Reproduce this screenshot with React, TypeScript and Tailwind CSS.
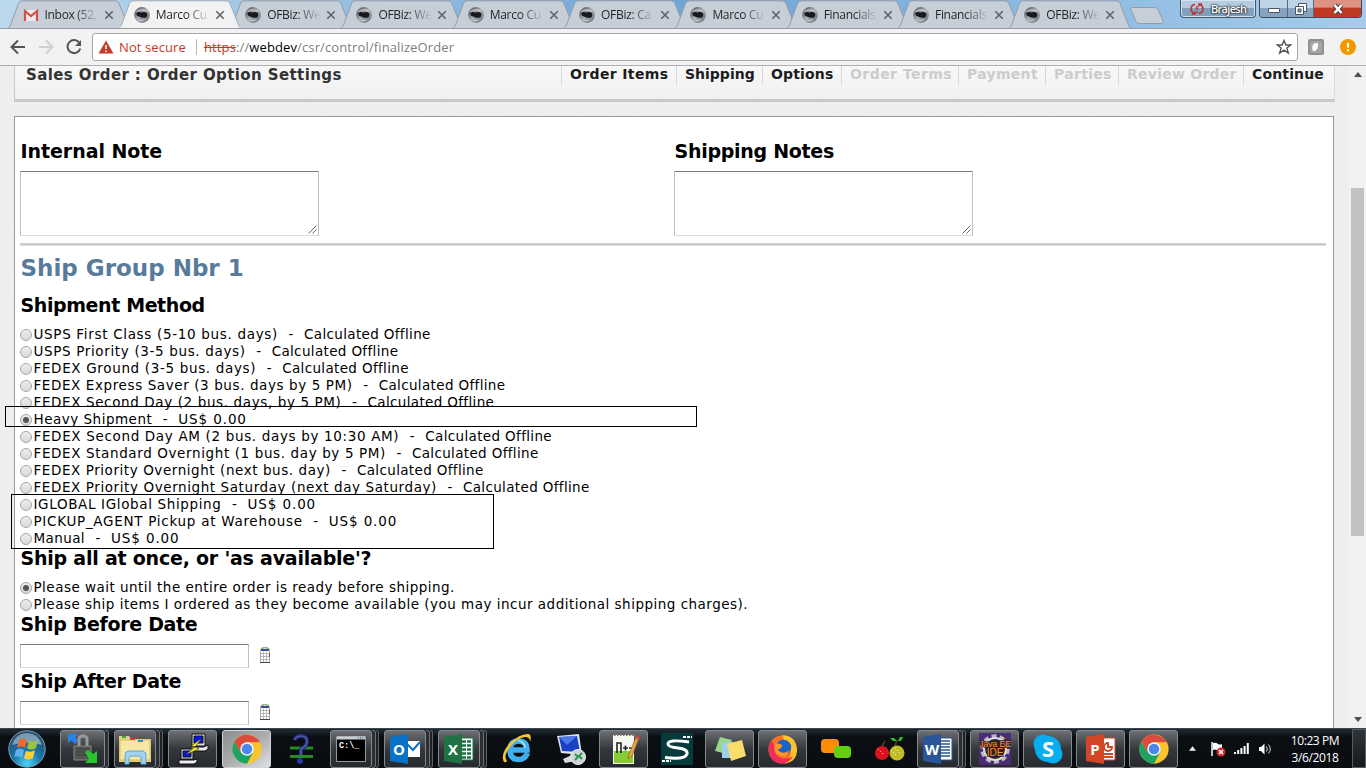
import React from "react";

const TABS = [
  "Inbox (52,",
  "Marco Cu",
  "OFBiz: We",
  "OFBiz: We",
  "Marco Cu",
  "OFBiz: Ca",
  "Marco Cu",
  "Financials",
  "Financials",
  "OFBiz: We",
];

const NAV = [
  { label: "Order Items", w: "w-[115px] tracking-[0.36px]", on: true },
  { label: "Shipping", w: "w-[86px]", on: true },
  { label: "Options", w: "w-[79px] tracking-[0.15px]", on: true },
  { label: "Order Terms", w: "w-[117px] tracking-[0.45px]", on: false },
  { label: "Payment", w: "w-[87px] tracking-[0.3px]", on: false },
  { label: "Parties", w: "w-[73px] tracking-[0.3px]", on: false },
  { label: "Review Order", w: "w-[125px] tracking-[0.25px]", on: false },
  { label: "Continue", w: "w-[91px] tracking-[0.15px]", on: true },
];

const OFFLINE = "Calculated Offline";
const FREE = "US$ 0.00";

const METHODS = [
  { name: "USPS First Class (5-10 bus. days)", price: OFFLINE, track: "tracking-[0.68px]" },
  { name: "USPS Priority (3-5 bus. days)", price: OFFLINE, track: "tracking-[0.65px]" },
  { name: "FEDEX Ground (3-5 bus. days)", price: OFFLINE, track: "tracking-[0.66px]" },
  { name: "FEDEX Express Saver (3 bus. days by 5 PM)", price: OFFLINE, track: "tracking-[0.6px]" },
  { name: "FEDEX Second Day (2 bus. days, by 5 PM)", price: OFFLINE, track: "tracking-[0.62px]" },
  { name: "Heavy Shipment", price: FREE, track: "tracking-[0.5px]" },
  { name: "FEDEX Second Day AM (2 bus. days by 10:30 AM)", price: OFFLINE, track: "tracking-[0.66px]" },
  { name: "FEDEX Standard Overnight (1 bus. day by 5 PM)", price: OFFLINE, track: "tracking-[0.62px]" },
  { name: "FEDEX Priority Overnight (next bus. day)", price: OFFLINE, track: "tracking-[0.57px]" },
  { name: "FEDEX Priority Overnight Saturday (next day Saturday)", price: OFFLINE, track: "tracking-[0.59px]" },
  { name: "IGLOBAL IGlobal Shipping", price: FREE, track: "tracking-[0.64px]" },
  { name: "PICKUP_AGENT Pickup at Warehouse", price: FREE, track: "tracking-[0.72px]" },
  { name: "Manual", price: FREE, track: "tracking-[0.4px]" },
];

function Globe() {
  return (
    <svg viewBox="0 0 16 16" className="h-4 w-4 shrink-0">
      <defs>
        <linearGradient id="gl" x1="0" y1="0" x2="1" y2="1">
          <stop offset="0" stopColor="#3c4046" />
          <stop offset=".5" stopColor="#a9aeb4" />
          <stop offset="1" stopColor="#5f646a" />
        </linearGradient>
      </defs>
      <circle cx="8" cy="8" r="7.9" fill="url(#gl)" />
      <path d="M2 4Q7 .5 13 3.500L13.500 5Q8 2.500 2.500 5.500Z" fill="#d5d8db" opacity=".6" />
      <path d="M2.500 6Q4 4.500 7 5.500Q11 4.500 13 6Q14 9 12 10.500Q8 11.500 5 9.500Q2 9 2.500 6Z" fill="#17191c" />
      <path d="M3 12.500Q8 16 13 12Q8 13.500 3 12.500Z" fill="#fff" opacity=".5" />
    </svg>
  );
}

function Gmail() {
  return (
    <svg viewBox="0 0 16 16" className="h-4 w-4 shrink-0">
      <path d="M2 3H14V14H2Z" fill="#eceaea" />
      <path d="M2 14V4L8 9L14 4V14" fill="none" stroke="#d5524a" strokeWidth="2.200" />
    </svg>
  );
}

function Tab({ label, index }: { label: string; index: number }) {
  const active = index === 1;
  return (
    <div className={active ? "relative z-10 -mr-[12.7px] h-[29px] w-[124px] shrink-0" : "relative -mr-[12.7px] h-[29px] w-[124px] shrink-0"}>
      <svg viewBox="0 0 124 29" className="absolute inset-0 h-[29px] w-[124px]">
        <path
          d="M0 28.500C2 28 2.500 27 3.500 25L11.500 3.500Q12.500 .8 15 .8H108Q111 .8 112 3.500L120.500 25C121.500 27.500 122 28 124 28.500Z"
          fill={active ? "#f2f2f2" : "#c6ced7"}
          stroke={active ? "#a5adb6" : "#939ca8"}
        />
        {active ? <path d="M0 28.500H124" stroke="#f2f2f2" strokeWidth="1.500" /> : <path d="M0 28.500H124" stroke="#939ca8" />}
      </svg>
      <div className="relative flex h-[30px] items-center pl-4">
        {index === 0 ? <Gmail /> : <Globe />}
        <span className="ml-1.5 w-[54px] overflow-hidden whitespace-pre bg-linear-to-r from-[#222] from-55% to-[#22222200] bg-clip-text text-[12px] leading-4 tracking-[-0.3px] text-transparent">
          {label}
        </span>
        <svg viewBox="0 0 10 10" className="ml-[5px] h-[10px] w-[10px]">
          <path d="M1.300 1.300L8.700 8.700M8.700 1.300L1.300 8.700" stroke="#5f6368" strokeWidth="1.600" />
        </svg>
      </div>
    </div>
  );
}

function WindowControls() {
  return (
    <div className="absolute right-1 top-0 flex h-[18px] text-[12px] text-white">
      <div className="mr-[3px] flex h-[18px] w-[76px] items-center gap-[7px] rounded-b-[4px] border border-t-0 border-[#46566c] bg-linear-to-b from-[#b4cbe0] from-45% to-[#7f9fbd] to-50% pl-[9px] shadow-[inset_0_0_0_1px_#d3e2ef]">
        <svg viewBox="0 0 14 12" className="h-3 w-3.5">
          <path d="M5 1.500Q1 2 1 6Q1 9 4 10.500M9 10.500Q13 10 13 6Q13 3 10 1.500M2 11H5V8.500M12 1H9V3.500M7 3V7M7 8.500V10" fill="none" stroke="#c4302b" strokeWidth="1.500" />
        </svg>
        <span className="text-[11px] font-semibold leading-none tracking-[-0.7px] [text-shadow:0_0_2px_#222,0_0_2px_#222,0_0_1px_#222]">Brajesh</span>
      </div>
      <div className="flex h-[18px] w-[103px] overflow-hidden rounded-b-[4px] border border-t-0 border-[#3f4d60]">
        <div className="flex w-[28px] items-center justify-center border-r border-[#57687d] bg-linear-to-b from-[#bfd3e6] from-45% to-[#86a3bf] to-50%">
          <div className="mt-1 h-[5px] w-3 rounded-[1px] border border-[#4b5562] bg-white" />
        </div>
        <div className="flex w-[26px] items-center justify-center border-r border-[#57687d] bg-linear-to-b from-[#bfd3e6] from-45% to-[#86a3bf] to-50%">
          <svg viewBox="0 0 12 12" className="h-3 w-3">
            <path d="M3.500 .5H11.500V8.500H3.500Z" fill="#fff" stroke="#4b5562" />
            <path d="M.5 3.500H8.500V11.500H.5Z" fill="#fff" stroke="#4b5562" />
            <path d="M3 6H6V9H3Z" fill="#8aa5c0" stroke="#4b5562" />
          </svg>
        </div>
        <div className="flex flex-1 items-center justify-center bg-linear-to-b from-[#dd9384] from-40% to-[#bf3822] to-50%">
          <svg viewBox="0 0 14 12" className="h-3 w-3.5">
            <path d="M3.500 2L10.500 10M10.500 2L3.500 10" stroke="#46414a" strokeWidth="4.500" />
            <path d="M3.500 2L10.500 10M10.500 2L3.500 10" stroke="#fff" strokeWidth="2.600" />
          </svg>
        </div>
      </div>
    </div>
  );
}

function Radio({ on }: { on?: boolean }) {
  return (
    <span className="mt-[3px] flex h-3 w-3 shrink-0 items-center justify-center rounded-full border border-[#a6a6a6] bg-linear-to-b from-[#eee] to-[#d8d8d8]">
      {on ? <span className="h-1.5 w-1.5 rounded-full bg-[#555]" /> : null}
    </span>
  );
}

function Option({ text, price, track, on }: { text: string; price?: string; track: string; on?: boolean }) {
  return (
    <div className="flex h-[17px] items-start whitespace-pre text-[13.500px] leading-[17px]">
      <Radio on={on} />
      <span className={"ml-[1.5px] " + track}>{text}</span>
      {price ? <span className="w-[26px] shrink-0 text-center">-</span> : null}
      {price ? <span className={price === FREE ? "tracking-[0.9px]" : "tracking-[0.35px]"}>{price}</span> : null}
    </div>
  );
}

function Heading({ children, className = "tracking-[-0.3px]" }: { children: React.ReactNode; className?: string }) {
  return <h3 className={"whitespace-nowrap pl-[0.5px] text-[19px] font-bold leading-6 " + className}>{children}</h3>;
}

function Note({ title, track }: { title: string; track: string }) {
  return (
    <div className="w-[654px]">
      <Heading className={track}>{title}</Heading>
      <div className="mt-[8px] flex h-[65px] w-[299px] items-end justify-end border border-[#c0c0c0] border-b-[#ddd] border-t-[#7a7a7a] bg-white p-px">
        <svg viewBox="0 0 9 9" className="h-[9px] w-[9px]">
          <path d="M.5 8.500L8.500 .5M4.500 8.500L8.500 4.500" stroke="#666" fill="none" />
        </svg>
      </div>
    </div>
  );
}

function DateField() {
  return (
    <div className="flex items-start">
      <div className="h-6 w-[229px] border border-[#c0c0c0] border-b-[#ddd] border-t-[#7a7a7a] bg-white" />
      <svg viewBox="0 0 10 16" className="ml-[11px] mt-[3px] h-4 w-[10px]">
        <path d="M.5 3.500Q.5 1 3 .5H7Q9.500 1 9.500 3.500V15.500H.5Z" fill="#fff" stroke="#aaa" />
        <path d="M1 2Q5 -.5 9 2" stroke="#83b576" fill="none" />
        <path d="M1 2H9V4H1Z" fill="#4148a2" />
        <path d="M1 6.500H9M1 9.500H9M1 12.500H9M3.500 4.500V15M6.500 4.500V15" stroke="#aaa" strokeWidth=".8" />
        <path d="M0 15.500H10" stroke="#444" />
        <path d="M9.500 6V10" stroke="#a44" />
      </svg>
    </div>
  );
}

function Chrome() {
  return (
    <svg viewBox="0 0 40 40" className="h-[30px] w-[30px]">
      <circle cx="20" cy="20" r="19.500" fill="#fbc42d" />
      <path d="M3.100 10.250A19.500 19.500 0 0 0 20 39.500L28 24.500L12 24.500Z" fill="#1da462" />
      <path d="M3.100 10.250L12 25L20 20V11H37Q34 3 20 .5Q9 1 3.100 10.250Z" fill="#dd4b3e" />
      <circle cx="20" cy="20" r="9" fill="#f5f5f5" />
      <circle cx="20" cy="20" r="7" fill="#4b88ee" />
    </svg>
  );
}

function OfficeIcon({ letter, color, kind }: { letter: string; color: string; kind: string }) {
  return (
    <svg viewBox="0 0 32 32" className="h-8 w-8">
      {kind === "mail" ? (
        <g>
          <path d="M18 8H31V24H18Z" fill="#fff" />
          <path d="M17 10L24 17L31 9" fill="none" stroke={color} strokeWidth="2" />
        </g>
      ) : (
        <g>
          <path d="M17 5H30V27H17Z" fill="#fff" stroke={color} />
          {kind === "pie" ? (
            <g fill="none" stroke={color} strokeWidth="2">
              <path d="M23 10A4 4 0 1 0 27 14H23Z" />
              <path d="M19 21H28M19 24H28" />
            </g>
          ) : kind === "grid" ? (
            <path d="M19 8.500H28M19 12.500H28M19 16.500H28M19 20.500H28M19 24.500H28" stroke={color} strokeWidth="2.500" strokeDasharray="4 1" />
          ) : (
            <path d="M19 8H28M19 11H28M19 14H28M19 17H28M19 20H28M19 23H28" stroke={color} strokeWidth="1.300" />
          )}
        </g>
      )}
      <path d="M1 4L19 1V31L1 28Z" fill={color} />
      <text x="10" y="21.500" textAnchor="middle" fontSize="15" fontWeight="700" fill="#fff" fontFamily="Open Sans, sans-serif">
        {letter}
      </text>
    </svg>
  );
}

function Vpn() {
  return (
    <svg viewBox="0 0 32 32" className="h-8 w-8">
      <path d="M12 13V6Q12 3 16 3Q20 3 20 6V13" fill="none" stroke="#999" strokeWidth="3" />
      <path d="M7 13H24V27H7Z" fill="#555" stroke="#888" />
      <path d="M9 16H22M9 19H22M9 22H22" stroke="#3c3c3c" />
      <path d="M1 1H11L8 4L11 8L8 11L4 7L1 10Z" fill="#2684ee" />
      <path d="M18 19L21 17L26 21L30 18V30H18L22 26Z" fill="#27c52e" />
    </svg>
  );
}

function Folder() {
  return (
    <svg viewBox="0 0 36 32" className="h-8 w-9">
      <path d="M2 3H12L14 6H34V29H2Z" fill="#e8cf78" />
      <path d="M3 7H33V27H3Z" fill="#f7e7a4" stroke="#d8bc60" />
      <path d="M5 4H9" stroke="#34a853" strokeWidth="2" />
      <path d="M13 6H18" stroke="#d34" strokeWidth="2" />
      <path d="M21 8H26" stroke="#38c" strokeWidth="2" />
      <path d="M8 31V22Q8 18 12 18H24Q29 18 29 22V31H24V25Q24 23 22 23H15Q12 23 12 25V31Z" fill="#9fd3ef" stroke="#5fa8d0" />
    </svg>
  );
}

function Putty() {
  return (
    <svg viewBox="0 0 32 32" className="h-8 w-8" stroke="#111">
      <path d="M15 1H28V13H15Z" fill="#ddd" />
      <path d="M17 3H26V10H17Z" fill="#0b14e8" />
      <path d="M14 14H27L31 12V16L28 18H14Z" fill="#eee" />
      <path d="M4 16H16V26H4Z" fill="#ddd" />
      <path d="M6 18H14V24H6Z" fill="#0b14e8" />
      <path d="M2 27H17L20 26V29L17 31H2Z" fill="#eee" />
      <path d="M25 5L14 13L18 14L8 22L22 16L18 14Z" fill="#f7ee1c" strokeWidth=".5" />
    </svg>
  );
}

function Help() {
  return (
    <svg viewBox="0 0 32 32" className="h-8 w-8">
      <path d="M5 15H28M5 23.500H28" stroke="#238c25" strokeWidth="3" />
      <path d="M9.500 7Q11 3 16 3Q22 3 22 8.500Q22 13 16 16V22" fill="none" stroke="#222b80" strokeWidth="4" />
      <path d="M9.500 7Q11 3 16 3Q22 3 22 8.500Q22 13 16 16V22" fill="none" stroke="#4f5cab" strokeWidth="1.600" />
      <circle cx="15" cy="28" r="3" fill="#2b35a4" />
    </svg>
  );
}

function Cmd() {
  return (
    <svg viewBox="0 0 30 26" className="h-[26px] w-[30px]">
      <path d="M.5 .5H29.500V25.500H.5Z" fill="#000" stroke="#999" />
      <path d="M1 2H29" stroke="#c9ced4" strokeWidth="3" />
      <path d="M22 2H28" stroke="#345" strokeDasharray="1 1" />
      <text x="3" y="12" fontSize="8.500" fontWeight="700" fill="#fff" fontFamily="Liberation Mono, monospace">C:\_</text>
    </svg>
  );
}

function InternetExplorer() {
  return (
    <svg viewBox="0 0 32 32" className="h-8 w-8">
      <path d="M26.500 20Q24 26.500 17.500 26.500Q9 26.500 9 17Q9 8 17.500 8Q26 8 26 17H11" fill="none" stroke="#3fb0ec" strokeWidth="5.500" />
      <path d="M24 15Q23 8 17 7.500" fill="none" stroke="#aee5fb" strokeWidth="1.500" />
      <path d="M3 29Q-1 22 8 11Q19 0 28 1Q31 3 29 9Q29 4 24 4Q16 5 9 14Q2 23 6 28Q4.500 30 3 29Z" fill="#f5c433" />
    </svg>
  );
}

function Remote() {
  return (
    <svg viewBox="0 0 32 32" className="h-8 w-8">
      <path d="M2 3L24 1L27 22L6 20Z" fill="#dde4ea" />
      <path d="M4 4L22 3L25 19L7 18Z" fill="#1842c4" />
      <path d="M4 4L22 3L12 12Z" fill="#4b79e5" />
      <path d="M8 26L17 22L21 28L10 30Z" fill="#d6d9dd" />
      <circle cx="23" cy="24" r="7.500" fill="#cdd3d7" stroke="#edf0f1" />
      <path d="M20 21L23 24L20 27M27 20L24 23L27 26" stroke="#239344" strokeWidth="1.800" fill="none" />
    </svg>
  );
}

function Notepad() {
  return (
    <svg viewBox="0 0 32 32" className="h-8 w-8">
      <path d="M5 2H26V31H5Z" fill="#f6f8ef" />
      <path d="M6 18H25V30H6Z" fill="#88cc35" />
      <path d="M6 2H26" stroke="#777" strokeWidth="2" strokeDasharray="1.500 1.500" />
      <path d="M9 20V10H13V20M15 15H20M17.500 12.500V17.500M21 15H25" fill="none" stroke="#222" strokeWidth="1.600" />
      <path d="M29 2L31 5L24 23L20 26L21 21Z" fill="#eaa83d" stroke="#8a612e" strokeWidth=".7" />
      <path d="M28 2L32 4L31 7L27 5Z" fill="#c64d4d" />
    </svg>
  );
}

function Sfs() {
  return (
    <svg viewBox="0 0 32 32" className="h-8 w-8">
      <path d="M0 0H32V32H0Z" fill="#063b3c" />
      <path d="M28 9Q7 6 7 11Q7 14 17 15Q27 16 26 21Q24 27 4 24.500" fill="none" stroke="#fff" strokeWidth="3" />
      <path d="M22 4H31M1 28H10" stroke="#fff" strokeWidth="2" strokeDasharray="3 1" />
    </svg>
  );
}

function Sticky() {
  return (
    <svg viewBox="0 0 32 26" className="h-[26px] w-8">
      <path d="M6 1L18 4L13 18L1 15Z" fill="#9bd58a" />
      <path d="M8 7L22 6V22H8Z" fill="#9ed0ed" />
      <path d="M13 8L28 4L32 20L17 25Z" fill="#f9dd6a" />
    </svg>
  );
}

function Firefox() {
  return (
    <svg viewBox="0 0 32 32" className="h-[31px] w-[31px]">
      <circle cx="16" cy="17" r="14.500" fill="#fc7225" />
      <path d="M16 2Q30 3 31 17Q31 30 18 31.500Q29 21 22 11Q17 8 16 2Z" fill="#ffc229" />
      <path d="M2 12Q0 27 11 31Q22 33 27 24Q20 28 13 25Q7 22 8 14L5 8Z" fill="#f02e5c" />
      <circle cx="17" cy="15" r="8" fill="#1a63c4" />
      <path d="M8 12Q12 9 16 13Q14 17 11 17Q15 23 23 18Q20 27 12 23Q6 20 8 12Z" fill="#ff9427" />
    </svg>
  );
}

function Blobs() {
  return (
    <svg viewBox="0 0 32 22" className="h-[22px] w-8">
      <rect x="1" y="1" width="18" height="14" rx="4" fill="#ff8c08" />
      <rect x="14" y="8" width="17" height="12" rx="4" fill="#62cf10" />
    </svg>
  );
}

function Fruit() {
  return (
    <svg viewBox="0 0 32 26" className="h-[26px] w-8">
      <path d="M9 10L12 5M22 10L24 4" stroke="#5a3d22" strokeWidth="1.500" fill="none" />
      <path d="M17 2H21L24 5H20ZM25 5L27 1H30L28 5Z" fill="#20c923" />
      <circle cx="9" cy="17" r="7" fill="#d9151b" />
      <circle cx="24" cy="17" r="7.500" fill="#c2bc25" />
      <path d="M5 13L10 18M18 14L24 20M22 12L28 18" stroke="#fff" strokeDasharray="1 2" />
    </svg>
  );
}

function Eclipse() {
  return (
    <svg viewBox="0 0 32 32" className="h-8 w-8">
      <path d="M0 0H32V32H0Z" fill="#4b2b75" />
      <circle cx="16" cy="16" r="13" fill="none" stroke="#bbb" strokeWidth="3.500" strokeDasharray="5 3.200" />
      <circle cx="16" cy="16" r="11" fill="#292130" stroke="#ddd" strokeWidth="2" />
      <g fill="#ff8e25" stroke="#292130" strokeWidth="1.500" paintOrder="stroke" textAnchor="middle" fontSize="10" fontFamily="Liberation Sans, sans-serif">
        <text x="16" y="14" fontSize="9" letterSpacing="-.2">Java EE</text>
        <text x="16" y="23">IDE</text>
      </g>
    </svg>
  );
}

function Skype() {
  return (
    <svg viewBox="0 0 32 32" className="h-8 w-8">
      <circle cx="11" cy="11" r="9.500" fill="#08adef" />
      <circle cx="21" cy="21" r="9.500" fill="#08adef" />
      <circle cx="16" cy="16" r="13" fill="#08adef" />
      <text x="16" y="24" textAnchor="middle" fontSize="22" fontWeight="700" fill="#fff" fontFamily="Open Sans, sans-serif">S</text>
    </svg>
  );
}

const APPS: { icon: React.ReactNode; stack: number }[] = [
  { icon: <Vpn />, stack: 2 },
  { icon: <Folder />, stack: 3 },
  { icon: <Putty />, stack: 1 },
  { icon: <Chrome />, stack: 4 },
  { icon: <Help />, stack: 0 },
  { icon: <Cmd />, stack: 3 },
  { icon: <OfficeIcon letter="O" color="#0872c6" kind="mail" />, stack: 3 },
  { icon: <OfficeIcon letter="X" color="#207245" kind="grid" />, stack: 3 },
  { icon: <InternetExplorer />, stack: 0 },
  { icon: <Remote />, stack: 0 },
  { icon: <Notepad />, stack: 1 },
  { icon: <Sfs />, stack: 0 },
  { icon: <Sticky />, stack: 1 },
  { icon: <Firefox />, stack: 1 },
  { icon: <Blobs />, stack: 0 },
  { icon: <Fruit />, stack: 0 },
  { icon: <OfficeIcon letter="W" color="#2a5699" kind="lines" />, stack: 3 },
  { icon: <Eclipse />, stack: 1 },
  { icon: <Skype />, stack: 1 },
  { icon: <OfficeIcon letter="P" color="#d24726" kind="pie" />, stack: 1 },
  { icon: <Chrome />, stack: 1 },
];

const FACE = "flex h-[38px] flex-1 items-center justify-center rounded-[3px] border ";

function TaskButton({ icon, stack, narrow }: { icon: React.ReactNode; stack: number; narrow: boolean }) {
  const look =
    stack === 0
      ? "border-transparent"
      : stack === 4
        ? "border-[#d0d3d5] bg-linear-to-br from-[#8b8d90] via-[#aaacae] to-[#e0e1e2]"
        : "border-[#85898d] bg-linear-to-b from-[#6d7073] via-[#34373b] to-[#26292d]";
  return (
    <div className={narrow ? "mr-1 flex w-[49px] shrink-0" : "mr-[5px] flex w-[49px] shrink-0"}>
      <div className={FACE + look}>{icon}</div>
      {stack === 2 || stack === 3 ? <div className="h-[38px] w-[4px] rounded-r-[3px] border-y border-r border-[#6d7175] bg-[#2b2e32]" /> : null}
      {stack === 3 ? <div className="h-[38px] w-[3px] rounded-r-[3px] border-y border-r border-[#5d6165] bg-[#1e2125]" /> : null}
    </div>
  );
}

function StartOrb() {
  return (
    <svg viewBox="0 0 38 38" className="h-[38px] w-[38px]">
      <defs>
        <radialGradient id="orb" cx=".5" cy=".9" r=".85">
          <stop offset="0" stopColor="#4fd3f5" />
          <stop offset=".45" stopColor="#1976ac" />
          <stop offset="1" stopColor="#264b6b" />
        </radialGradient>
      </defs>
      <circle cx="19" cy="19" r="18.200" fill="url(#orb)" stroke="#7fa3b9" />
      <path d="M4 15Q8 3 19 3Q30 3 34 15Q19 10 4 15Z" fill="#d0e4ee" opacity=".5" />
      <path d="M11 10Q15 7 19 10L17 18Q13 15 9 18Z" fill="#ec6932" />
      <path d="M21 11Q25 13 30 10L28 18Q23 21 19 18Z" fill="#9bc63b" />
      <path d="M8 20Q12 17 16 20L14 28Q10 25 6 27Z" fill="#5cb1e8" />
      <path d="M18 21Q23 23 27 20L25 28Q20 31 16 28Z" fill="#ffce36" />
    </svg>
  );
}

function Taskbar() {
  return (
    <footer className="flex h-10 shrink-0 items-center border-t border-[#3b4650] bg-linear-to-b from-[#1d252d] from-5% via-[#0b0f14] via-20% to-[#090c10] font-['Open_Sans',sans-serif]">
      <div className="flex w-[60px] shrink-0 pl-2">
        <StartOrb />
      </div>
      {APPS.map((a, i) => (
        <TaskButton key={i} icon={a.icon} stack={a.stack} narrow={i >= 9} />
      ))}
      <div className="ml-[7px] flex items-center">
        <svg viewBox="0 0 8 5" className="h-[5px] w-[7px]">
          <path d="M0 5L4 0L8 5Z" fill="#eee" />
        </svg>
        <svg viewBox="0 0 16 16" className="ml-[14px] h-4 w-4">
          <path d="M2 1V15" stroke="#fff" strokeWidth="1.500" />
          <path d="M3 2Q6 1 8 3Q10 4 12 3V9Q9 10 7 9Q5 8 3 9Z" fill="#fff" />
          <circle cx="11" cy="11" r="4.500" fill="#d8292d" />
          <path d="M9 9L13 13M13 9L9 13" stroke="#fff" strokeWidth="1.500" />
        </svg>
        <svg viewBox="0 0 15 11" className="ml-[8px] h-[11px] w-[15px]">
          <path d="M1 11V9M4.200 11V7M7.400 11V5M10.600 11V3M13.800 11V0" stroke="#fff" strokeWidth="2" />
        </svg>
        <svg viewBox="0 0 14 12" className="ml-[9px] h-3 w-3.5">
          <path d="M1 4H3L6.500 .5V11.500L3 8H1Z" fill="#fff" />
          <path d="M8.500 3.500Q10 6 8.500 8.500M10.500 1.500Q14 6 10.500 10.500" stroke="#ddd" fill="none" />
        </svg>
      </div>
      <div className="ml-[14px] w-[58px] text-center text-[12px] leading-[17px] tracking-[-0.4px] text-white">
        <div>10:23 PM</div>
        <div>3/6/2018</div>
      </div>
      <div className="ml-auto h-[39px] w-[14px] shrink-0 border border-[#555b61] bg-linear-to-b from-[#30353a] to-[#15191d]" />
    </footer>
  );
}

function BrowserChrome() {
  return (
    <header className="shrink-0 font-['Open_Sans',sans-serif]">
      <div className="relative h-[29px] overflow-hidden border-b border-[#939ca8] bg-linear-to-r from-[#bcd9ee] via-[#6fa5d7] to-[#a5ccea]">
        <div className="flex pl-[6.500px]">
          {TABS.map((t, i) => (
            <Tab key={i} label={t} index={i} />
          ))}
          <svg viewBox="0 0 34 18" className="ml-[10px] mt-[7px] h-[18px] w-[34px]">
            <path d="M2 .5H25Q27 .5 28 2.500L33 14Q34 16.500 32 16.500H9Q7 16.500 6 14.500L1 3Q0 .5 2 .5Z" fill="#c6ced7" stroke="#939ca8" />
          </svg>
        </div>
        <WindowControls />
      </div>
      <div className="flex h-[37px] items-center border-b border-[#b0b0b0] bg-[#f2f2f2]">
        <svg viewBox="0 0 16 16" className="ml-2.5 h-4 w-4">
          <path d="M15 8H2M8 1.500L1.500 8L8 14.500" fill="none" stroke="#555" strokeWidth="2" />
        </svg>
        <svg viewBox="0 0 16 16" className="ml-3 h-4 w-4">
          <path d="M1 8H14M8 1.500L14.500 8L8 14.500" fill="none" stroke="#d0d0d0" strokeWidth="2" />
        </svg>
        <svg viewBox="0 0 16 16" className="ml-3 h-4 w-4">
          <path d="M13.500 4A6.500 6.500 0 1 0 14.300 9.500" fill="none" stroke="#555" strokeWidth="2" />
          <path d="M15 1V7H9Z" fill="#555" />
        </svg>
        <div className="ml-[10px] flex h-7 w-[1206px] items-center whitespace-nowrap rounded-[3px] border border-[#a6a6a6] bg-white">
          <svg viewBox="0 0 16 14" className="ml-[5px] h-[14px] w-4">
            <path d="M8 .5L15.500 13.500H.5Z" fill="#c53929" />
            <path d="M8 5V9M8 10.500V12" stroke="#fff" strokeWidth="1.600" />
          </svg>
          <span className="ml-[5px] w-[68px] pt-px text-[13px] tracking-[0.1px] text-[#c53929]">Not secure</span>
          <div className="ml-[9px] h-4 w-px bg-[#b8b8b8]" />
          <span className="ml-[7px] pt-px text-[13px] tracking-[0.12px] text-[#808080]">
            <span className="text-[#c53929] line-through">https</span>://<span className="text-black">webdev</span>/csr/control/finalizeOrder
          </span>
          <svg viewBox="0 0 16 16" className="ml-auto mr-[5px] h-4 w-4">
            <path d="M8 1.500L9.900 6H14.700L10.900 9L12.300 14L8 11.100L3.700 14L5.100 9L1.300 6H6.100Z" fill="none" stroke="#555" strokeWidth="1.400" />
          </svg>
        </div>
        <svg viewBox="0 0 16 16" className="ml-2.5 h-4 w-4">
          <rect width="16" height="16" rx="2" fill="#8f8f8f" />
          <rect x="2" y="2" width="12" height="12" rx="2" fill="#a5a5a5" />
          <path d="M5 12Q3 7 6 4.500L10 4Q11 9 7 12Z" fill="#fff" />
        </svg>
        <svg viewBox="0 0 16 16" className="ml-4 h-4 w-4">
          <circle cx="8" cy="8" r="8" fill="#f29900" />
          <path d="M8 4V8.500M8 10.200V12.200" stroke="#fff" strokeWidth="2" />
        </svg>
      </div>
    </header>
  );
}

export default function App() {
  return (
    <div className="relative flex h-[768px] w-[1366px] flex-col overflow-hidden bg-[#f0f0f0]">
      <BrowserChrome />
      <div className="flex h-[662px] shrink-0 overflow-hidden">
        <main className="relative w-[1349px] pl-[14px] font-['DejaVu_Sans',sans-serif] text-black">
          <svg className="absolute inset-0 h-full w-full opacity-[0.06]">
            <filter id="grain">
              <feTurbulence type="fractalNoise" baseFrequency="0.5" numOctaves="2" />
              <feColorMatrix type="saturate" values="0" />
            </filter>
            <rect width="100%" height="100%" filter="url(#grain)" />
          </svg>
          <div className="relative flex h-[36px] w-[1321px] justify-between border-b-[3px] border-l border-r border-[#c9c9c9] border-r-[#ddd] bg-linear-to-b from-[#f8f8f8] to-[#f0f0f0] pl-[11px]">
            <h1 className="whitespace-nowrap text-[15px] font-bold leading-[18px] tracking-[0.4px] text-[#333]">Sales Order : Order Option Settings</h1>
            <nav className="flex h-[19px]">
              {NAV.map((n) => (
                <div key={n.label} className={"whitespace-nowrap border-l border-[#d8d8d8] pl-2 text-[14px] font-bold leading-4 " + n.w}>
                  <span className={n.on ? "text-[#1c1c1c]" : "text-[#ccc]"}>{n.label}</span>
                </div>
              ))}
            </nav>
          </div>
          <section className="relative mt-[14px] h-[640px] w-[1320px] border border-[#999] bg-white pl-[5px] pt-[22px]">
            <div className="flex">
              <Note title="Internal Note" track="tracking-[-0.05px]" />
              <Note title="Shipping Notes" track="tracking-[-0.28px]" />
            </div>
            <div className="mt-[7px] h-[3px] w-[1306px] border-b border-t border-b-[#ddd] border-t-[#d0d0d0] bg-[#c8c8c8]" />
            <h2 className="mt-1.5 pl-[0.5px] text-[23px] font-bold leading-8 text-[#587a9b]">Ship Group Nbr 1</h2>
            <Heading className="mt-[9px] tracking-[-0.4px]">Shipment Method</Heading>
            <div className="mt-[9px]">
              {METHODS.map((m, i) => (
                <Option key={i} text={m.name} price={m.price} track={m.track} on={i === 5} />
              ))}
            </div>
            <Heading className="-mt-px tracking-[-0.22px]">Ship all at once, or &#39;as available&#39;?</Heading>
            <div className="mt-[9px]">
              <Option text="Please wait until the entire order is ready before shipping." track="tracking-[0.48px]" on />
              <Option text="Please ship items I ordered as they become available (you may incur additional shipping charges)." track="tracking-[0.49px]" />
            </div>
            <Heading className="-mt-px tracking-[-0.32px]">Ship Before Date</Heading>
            <div className="mt-[8px]"><DateField /></div>
            <Heading className="mt-[1px] tracking-[-0.32px]">Ship After Date</Heading>
            <div className="mt-[8px]"><DateField /></div>
          </section>
        </main>
        <aside className="flex w-[17px] flex-col items-center justify-between bg-[#f1f1f1] py-[6px]">
          <svg viewBox="0 0 8 5" className="h-[5px] w-2"><path d="M0 5L4 0L8 5Z" fill="#505050" /></svg>
          <div className="mb-[70px] h-[348px] w-[13px] bg-[#c1c1c1]" />
          <svg viewBox="0 0 8 5" className="h-[5px] w-2"><path d="M0 0L4 5L8 0Z" fill="#505050" /></svg>
        </aside>
      </div>
      <Taskbar />
      <div className="absolute left-[5px] top-[406px] h-[21px] w-[692px] border border-black" />
      <div className="absolute left-[11px] top-[494px] h-[55px] w-[483px] border border-black" />
    </div>
  );
}
